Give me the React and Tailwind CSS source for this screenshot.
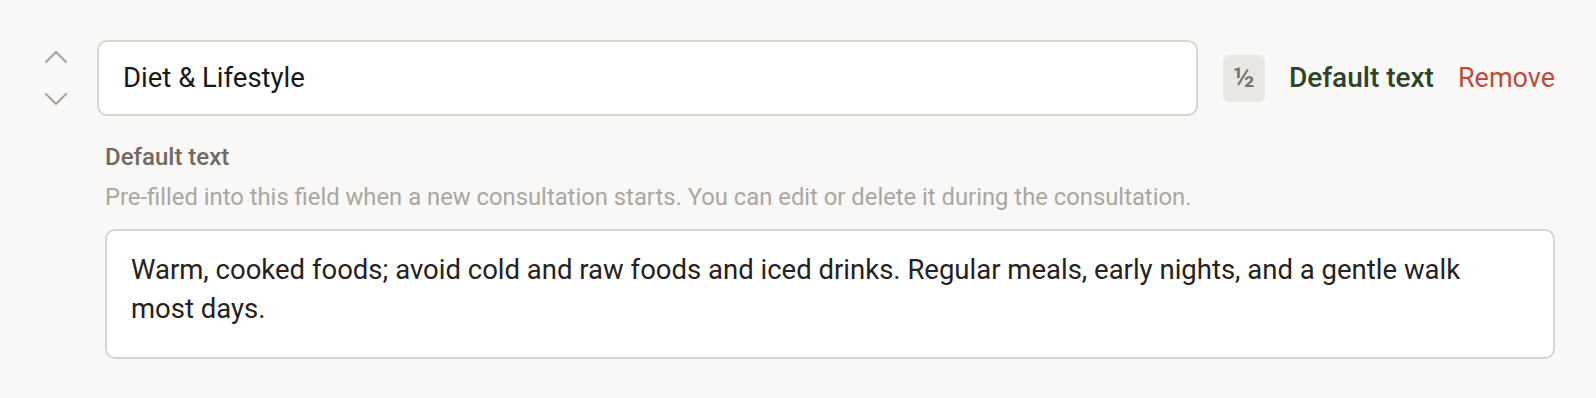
import React from "react";

function Chevron({ up }) {
  return (
    <svg width="24" height="14" viewBox="0 0 24 14" fill="none" className="block">
      <path
        d={up ? "M2 12 L12 2 L22 12" : "M2 2 L12 12 L22 2"}
        stroke="#a9a49f"
        strokeWidth="2.2"
        strokeLinecap="round"
        strokeLinejoin="round"
      />
    </svg>
  );
}

export default function App() {
  return (
    <div
      className="w-[1596px] h-[398px] bg-[#f9f8f6] pt-[40px] pl-[44px] pr-[41px]"
      style={{ fontFamily: "Roboto, 'Noto Sans', sans-serif" }}
    >
      <div className="flex items-center">
        <div className="flex flex-col items-center gap-[28px] w-[24px]">
          <Chevron up />
          <Chevron />
        </div>
        <div className="ml-[29px] flex-1 h-[76px] rounded-[10px] border-2 border-[#d8d4cf] bg-white flex items-center pl-[24px] text-[27.5px] text-[#1a1817]">
          Diet &amp; Lifestyle
        </div>
        <div className="ml-[25px] w-[42px] h-[47px] rounded-[6px] bg-[#e9e7e4] flex items-center justify-center text-[28px] font-medium leading-none text-[#77716b]">
          ½
        </div>
        <div className="ml-[24px] text-[28px] font-medium text-[#2c4429]">Default text</div>
        <div className="ml-[24px] text-[27px] text-[#bb4d3c]">Remove</div>
      </div>
      <div className="ml-[61px] mt-[26px]">
        <div className="text-[24px] leading-[30px] font-medium text-[#716a64]">Default text</div>
        <div className="mt-[10px] text-[23.8px] leading-[30px] text-[#aba6a0]">
          Pre-filled into this field when a new consultation starts. You can edit or delete it during the consultation.
        </div>
        <div className="mt-[17px] h-[130px] rounded-[10px] border-2 border-[#d8d4cf] bg-white pl-[24px] pr-[24px] pt-[19px] text-[27.5px] leading-[39px] text-[#262220]">
          Warm, cooked foods; avoid cold and raw foods and iced drinks. Regular meals, early nights, and a gentle walk most days.
        </div>
      </div>
    </div>
  );
}
